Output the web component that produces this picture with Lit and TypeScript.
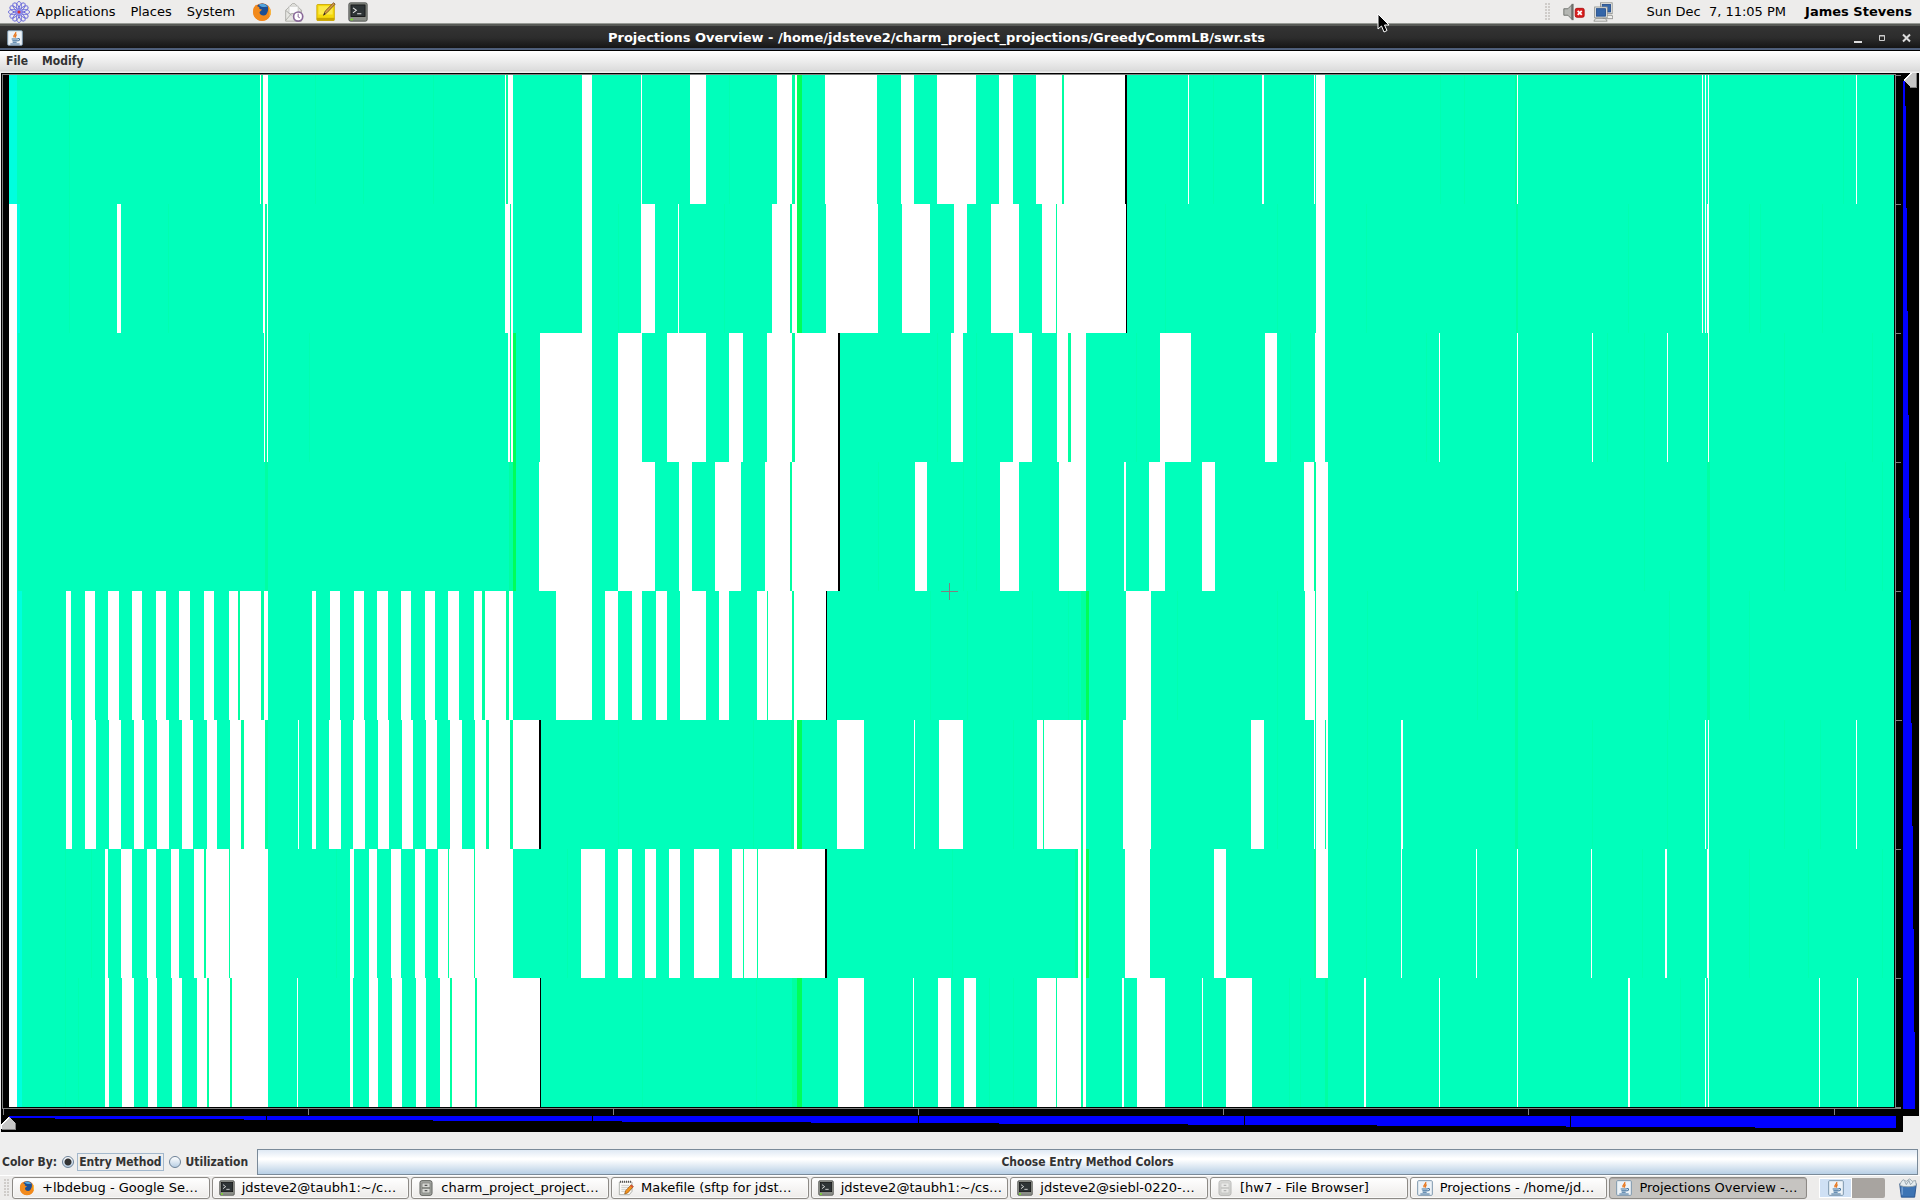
import { LitElement, html, svg, css, type SVGTemplateResult } from "lit";
import { customElement, property, state } from "lit/decorators.js";

type Span = [number, number];

interface Lane {
  idle: Span[];
  edge?: Span[];
  balance?: Span[];
  black?: Span[];
  faint?: number[];
  cyan?: Span;
}

const LANE_HEIGHT = 129;
const LANE_TOP = 75;

const LANES: Lane[] = [
  {
    cyan: [9, 17],
    idle: [[260, 261], [263, 268], [505, 506], [508, 513], [582, 592], [641, 642], [690, 706], [777, 792], [795, 797], [825, 877], [901, 914], [937, 976], [999, 1013], [1036, 1062], [1064, 1125], [1188, 1189], [1262, 1264], [1314, 1315], [1316, 1325], [1517, 1518], [1702, 1703], [1705, 1706], [1708, 1709], [1856, 1857]],
    edge: [[261, 263], [506, 508], [792, 795], [1062, 1064], [1515, 1517]],
    balance: [[797, 802]],
    black: [[1125, 1127]],
    faint: [69, 315, 363, 433, 729, 1213, 1440, 1464, 1843],
  },
  {
    cyan: [17, 20],
    idle: [[9, 17], [117, 121], [263, 265], [267, 268], [505, 510], [511, 513], [582, 592], [641, 655], [678, 679], [772, 790], [792, 797], [826, 878], [902, 930], [954, 967], [991, 1019], [1042, 1056], [1057, 1126], [1316, 1325], [1702, 1703], [1705, 1706], [1707, 1709]],
    edge: [[265, 267], [510, 511], [790, 792], [1056, 1057], [1516, 1518]],
    balance: [[797, 802]],
    black: [[1126, 1127]],
    faint: [69, 168, 618, 724, 1165, 1277, 1366, 1628, 1749, 1760, 1822],
  },
  {
    cyan: [17, 18],
    idle: [[9, 17], [264, 265], [267, 268], [508, 510], [511, 513], [540, 592], [618, 642], [667, 706], [729, 743], [767, 792], [795, 838], [951, 963], [1013, 1032], [1057, 1068], [1071, 1086], [1160, 1191], [1265, 1277], [1315, 1325], [1439, 1440], [1517, 1518], [1592, 1593], [1667, 1668], [1708, 1709]],
    edge: [[265, 267], [510, 511], [792, 795], [1068, 1071], [1707, 1708]],
    balance: [[513, 516]],
    black: [[838, 840]],
    faint: [309, 937, 976, 1136, 1290, 1426, 1607, 1644, 1784, 1872],
  },
  {
    cyan: [17, 18],
    idle: [[9, 17], [539, 592], [618, 655], [679, 692], [715, 741], [765, 790], [792, 838], [915, 927], [1000, 1019], [1059, 1086], [1124, 1126], [1149, 1165], [1202, 1215], [1304, 1314], [1316, 1328], [1517, 1518]],
    edge: [[265, 268], [509, 513], [790, 792], [1314, 1316], [1707, 1710]],
    balance: [[513, 516]],
    black: [[838, 840]],
    faint: [878, 963, 976, 1644, 1784, 1845, 1882],
  },
  {
    cyan: [17, 22],
    idle: [[9, 17], [66, 71], [85, 95], [108, 119], [132, 142], [156, 166], [179, 190], [204, 214], [229, 238], [240, 261], [264, 268], [312, 316], [330, 340], [354, 364], [377, 388], [401, 411], [425, 435], [448, 459], [474, 482], [485, 506], [509, 513], [556, 592], [605, 618], [632, 642], [656, 667], [680, 706], [719, 729], [757, 767], [768, 792], [794, 826], [1126, 1151], [1305, 1315], [1316, 1328]],
    edge: [[238, 240], [261, 264], [482, 485], [506, 509], [767, 768], [792, 794], [1081, 1086], [1315, 1316], [1515, 1518], [1707, 1710]],
    balance: [[1086, 1089]],
    black: [[826, 827]],
    faint: [930, 967, 1032, 1068, 1177, 1277, 1367, 1477, 1669, 1749],
  },
  {
    cyan: [17, 22],
    idle: [[9, 17], [66, 72], [85, 96], [109, 121], [134, 144], [157, 169], [182, 193], [207, 217], [230, 241], [244, 265], [298, 299], [312, 316], [329, 341], [353, 365], [378, 389], [402, 413], [426, 437], [450, 462], [475, 486], [489, 510], [513, 539], [794, 797], [837, 864], [914, 915], [939, 963], [1037, 1043], [1044, 1081], [1083, 1086], [1123, 1151], [1251, 1264], [1314, 1315], [1316, 1325], [1326, 1328], [1401, 1403], [1705, 1706], [1708, 1709], [1856, 1857]],
    edge: [[241, 244], [265, 268], [486, 489], [510, 513], [791, 794], [1043, 1044], [1081, 1083], [1325, 1326], [1515, 1518]],
    balance: [[797, 802]],
    black: [[539, 541]],
    faint: [618, 753, 1013, 1277, 1367, 1592, 1667, 1784, 1820],
  },
  {
    cyan: [17, 22],
    idle: [[9, 17], [105, 108], [121, 132], [147, 156], [171, 179], [194, 204], [206, 229], [230, 268], [350, 354], [369, 377], [391, 401], [415, 425], [438, 448], [449, 474], [475, 513], [581, 605], [618, 632], [645, 656], [669, 680], [694, 719], [732, 743], [744, 757], [758, 825], [1078, 1081], [1083, 1086], [1125, 1150], [1214, 1226], [1316, 1328], [1401, 1402], [1476, 1477], [1517, 1518], [1591, 1592], [1665, 1667], [1707, 1709]],
    edge: [[204, 206], [229, 230], [448, 449], [474, 475], [743, 744], [757, 758], [1075, 1078], [1081, 1083], [1314, 1316]],
    balance: [[1086, 1089]],
    black: [[825, 827]],
    faint: [65, 91, 336, 567, 952, 1366, 1642, 1749, 1808, 1882],
  },
  {
    cyan: [17, 22],
    idle: [[9, 17], [105, 109], [122, 134], [148, 157], [172, 182], [197, 207], [209, 230], [232, 268], [297, 298], [350, 353], [369, 378], [392, 402], [416, 426], [440, 450], [452, 475], [477, 540], [838, 864], [913, 914], [938, 951], [964, 976], [1037, 1056], [1057, 1081], [1083, 1086], [1122, 1124], [1137, 1165], [1202, 1203], [1226, 1252], [1364, 1366], [1439, 1440], [1517, 1518], [1628, 1630], [1705, 1706], [1708, 1709], [1819, 1820], [1857, 1858]],
    edge: [[207, 209], [230, 232], [450, 452], [475, 477], [792, 797], [1056, 1057], [1081, 1083], [1325, 1328]],
    balance: [[797, 802]],
    black: [[540, 541]],
    faint: [65, 78, 642, 756, 989, 1013, 1289, 1300, 1680],
  },
];

const H_STEPS = [9, 55, 244, 433, 622, 811, 999, 1188, 1377, 1566, 1755, 1896];
const V_STEPS = [81, 106, 208, 311, 415, 518, 620, 723, 826, 929, 1032, 1109];
const H_GAPS = [266, 592, 918, 1244, 1570];
const X_TICKS = [3, 308, 613, 918, 1223, 1528, 1834];

const spans = (list: Span[] | undefined, y: number, cls: string): SVGTemplateResult[] =>
  (list ?? []).map(([a, b]) => svg`<rect class=${cls} x=${a} y=${y} width=${b - a} height=${LANE_HEIGHT}></rect>`);

const ICONS: Record<string, SVGTemplateResult> = {
  distro: svg`
    <g fill="none" stroke="#5a5ad8" stroke-width="0.9">
      ${Array.from({ length: 12 }, (_, i) => svg`<ellipse cx="12" cy="5.600" rx="2.600" ry="5" transform="rotate(${i * 30} 12 12)"></ellipse>`)}
    </g>
    <circle cx="12" cy="12" r="3.400" fill="#8c8cf0"></circle>
    <circle cx="12" cy="12" r="1.700" fill="#d83030"></circle>`,
  firefox: svg`
    <circle cx="12" cy="12" r="10.5" fill="#e66a12"></circle>
    <circle cx="12.5" cy="9.5" r="7.8" fill="#1d4f94"></circle>
    <path d="M8 3c4-2 9-.6 11 3-3-1-4 .5-6 0S9 5 8 3z" fill="#54a5dc"></path>
    <path d="M2 7c1.500-2.500 2.500-3 3-4 .5 2 2 2.500 4 3-1 2 0 3 3 3-1 2-3 2-3 4 1 4 6 4 8 2 2-3 3-6 2-10 4 4 4.500 9 2 13-4 6-13 7-18 0C1 15 1 11 2 7z" fill="#f28a1c"></path>
    <path d="M19.500 5c3 3.500 4 8 1.500 12 .5-4 .5-8-1.500-12z" fill="#fcd34a"></path>`,
  mail: svg`
    <path d="M2 10 10 2h3l8 8v13H2z" fill="#e6e6e2" stroke="#a5a5a0"></path>
    <path d="M6 5h11v9H6z" fill="#fafafa" stroke="#c4c4c0"></path>
    <path d="m2 22 7-8h5l7 8M2 10l7 6M21 10l-6 5" fill="none" stroke="#a5a5a0"></path>
    <circle cx="17" cy="17.500" r="5.500" fill="#fff" stroke="#8a6a9a" stroke-width="2"></circle>
    <path d="M17 14v4l2 1" fill="none" stroke="#8a6a9a" stroke-width="1.200"></path>`,
  note: svg`
    <rect x="1" y="3" width="21" height="19" rx="1" fill="#f5d90a" stroke="#c9a400"></rect>
    <rect x="1" y="19" width="21" height="3.500" fill="#c9a400"></rect>
    <rect x="3" y="5" width="17" height="10" fill="#fbe94a"></rect>
    <path d="m9 16 2-5L21 1l2 1.500L13 13z" fill="#d89a48" stroke="#6e4a1c"></path>
    <path d="m9 16 1-3 1.500 1.500z" fill="#222"></path>`,
  terminal: svg`
    <rect x="1" y="1" width="22" height="22" rx="2" fill="#8b8e88" stroke="#454744"></rect>
    <rect x="3.500" y="3.500" width="17" height="14" fill="#2e3436" stroke="#111"></rect>
    <path d="m6 7 4 3-4 3M11 14h5" fill="none" stroke="#e4e4e4" stroke-width="1.300"></path>
    <path d="M3 21h3" stroke="#7ae02a" stroke-width="2"></path>`,
  java: svg`
    <rect x="1" y="1" width="22" height="22" rx="1.500" fill="#edf3f8" stroke="#7d97ad" stroke-width="1.500"></rect>
    <path d="M13 3c2 3-5 4-2 8M14.500 7c-3 1.500-1 2.500-2 4.500" fill="none" stroke="#e8771e" stroke-width="2"></path>
    <path d="M7 13.500h9M8 16h8M8.500 18.500h6M16 13c4-.8 3.500 3 0 3.500M5 21h14" fill="none" stroke="#3f709c" stroke-width="1.600"></path>`,
  cabinet: svg`
    <rect x="3" y="1" width="18" height="22" rx="3" fill="#a9aba7" stroke="#5c5e5a" stroke-width="1.500"></rect>
    <rect x="6" y="4.500" width="12" height="7" fill="#d6d7d3" stroke="#70726e"></rect>
    <rect x="6" y="12.500" width="12" height="7" fill="#d6d7d3" stroke="#70726e"></rect>
    <path d="M10 8h4M10 16h4" stroke="#555" stroke-width="2"></path>`,
  editor: svg`
    <path d="M2 3h19v14l-4 5H2z" fill="#fbfbf9" stroke="#8d8f8a"></path>
    <path d="M3 2.500h17" stroke="#555" stroke-width="3" stroke-dasharray="1.500 1.500"></path>
    <path d="M5 8h12M5 11h12M5 14h8M5 17h6" stroke="#b3b5b1"></path>
    <path d="m10 21 1.500-5L20 7l3 3-8.500 9.500z" fill="#f2921d" stroke="#8a4a06"></path>
    <path d="m20 7 3 3-1.500 1.500-3-3z" fill="#d84a3a"></path>`,
  volume: svg`
    <path d="M1 8h5l5-5v18l-5-5H1z" fill="#b4b6b2" stroke="#60625e"></path>
    <path d="M10.500 2h2.500v20h-2.500z" fill="#6c6e6a"></path>
    <rect x="15" y="7.500" width="11" height="11" rx="2" fill="#d81e1e" stroke="#a80808"></rect>
    <path d="m18 10.500 5 5m0-5-5 5" stroke="#fff" stroke-width="2.200"></path>`,
  network: svg`
    <g stroke="#8a8c88" fill="#f0f0ee">
      <path d="M12 16h11l1 4H12z"></path>
      <rect x="9" y="1" width="14" height="13"></rect>
      <rect x="11" y="3" width="10" height="9" fill="#3566a8" stroke="#204a87"></rect>
      <path d="M3 20h12l2 3H1z"></path>
      <rect x="2" y="6" width="15" height="13"></rect>
      <rect x="4" y="8" width="11" height="9" fill="#3566a8" stroke="#204a87"></rect>
    </g>`,
  trash: svg`
    <path d="M2 7h20l-2 16H4z" fill="#3d74b4" stroke="#204a87"></path>
    <path d="m3 6 3-4 4 2 4-3 3 3 4-1 1 6c-6 2-14 2-20 0z" fill="#e4ebee" stroke="#8a9aa4"></path>
    <path d="m8 4 2 4 3-5 2 5 3-3" fill="none" stroke="#8a9aa4"></path>
    <path d="M5 11v9" stroke="#7fa8d6" stroke-width="1.500"></path>`,
};

@customElement("ui-icon")
class UiIcon extends LitElement {
  @property() name = "java";
  @property({ type: Boolean }) wide = false;

  static styles = css`
    :host { display: block; flex: none; width: 20px; height: 20px; }
    svg { display: block; width: 100%; height: 100%; }
  `;

  render() {
    return html`<svg viewBox=${this.wide ? "0 0 27 24" : "0 0 24 24"} aria-hidden="true">${ICONS[this.name]}</svg>`;
  }
}

@customElement("timeline-view")
class TimelineView extends LitElement {
  static styles = css`
    :host { display: grid; grid-template-columns: minmax(0, 1fr) 16px; grid-template-rows: minmax(0, 1fr) 16px; }
    svg { display: block; width: 100%; height: 100%; background: #000; shape-rendering: crispEdges; }
    .corner { background: #eee; }
    .busy { fill: #00ffbb; }
    .idle { fill: #fff; }
    .edge { fill: #00ffa2; }
    .balance { fill: #00ff58; }
    .gap { fill: #000; }
    .cyan { fill: #00ffde; }
    .faint { fill: #00ffb0; }
    .axis { fill: #808080; }
    .load { fill: #00f; }
    .thumb { fill: #c6c6c6; }
    .shine { fill: #fff; }
    .shade { fill: #808080; }
  `;

  private plot() {
    return html`<svg viewBox="1 73 1902 1043" preserveAspectRatio="none" role="img" aria-label="Processor timelines">
      <rect class="axis" x="2" y="74" width="1894" height="1"></rect>
      <rect class="axis" x="2" y="74" width="1" height="1034"></rect>
      <rect class="axis" x="2" y="1108" width="1899" height="1"></rect>
      <rect class="axis" x="1895" y="74" width="1" height="1034"></rect>
      ${X_TICKS.map((x) => svg`<rect class="axis" x=${x} y="1108" width="1" height="7"></rect>`)}
      ${Array.from({ length: 9 }, (_, i) => svg`<rect class="axis" x="1896" y=${75 + i * LANE_HEIGHT} width=${i === 5 ? 6 : 5} height="1"></rect>`)}
      <rect class="busy" x="9" y="75" width="1885" height="1032"></rect>
      ${LANES.map((lane, i) => {
        const y = LANE_TOP + i * LANE_HEIGHT;
        return svg`
          ${spans(lane.faint?.map((x): Span => [x, x + 1]), y, "faint")}
          ${spans(lane.cyan ? [lane.cyan] : [], y, "cyan")}
          ${spans(lane.idle, y, "idle")}
          ${spans(lane.edge, y, "edge")}
          ${spans(lane.balance, y, "balance")}
          ${spans(lane.black, y, "gap")}`;
      })}
      <rect class="axis" x="941" y="591" width="17" height="1"></rect>
      <rect class="axis" x="949" y="583" width="1" height="17"></rect>
    </svg>`;
  }

  render() {
    return html`
      ${this.plot()}
      <svg viewBox="1903 73 16 1043" preserveAspectRatio="none" role="img" aria-label="Load by processor">
        ${V_STEPS.slice(0, -1).map((y, i) => svg`<rect class="load" x="1903" y=${y} width=${i + 2} height=${V_STEPS[i + 1] - y}></rect>`)}
        <path class="thumb" d="M1904 80l6-7h6v14h-6z"></path>
        <path class="shine" d="M1903 80l7-7h2l-7 8z"></path>
        <path class="shade" d="M1916 73h1v15h-7v-1h6z"></path>
      </svg>
      <svg viewBox="1 1116 1902 16" preserveAspectRatio="none" role="img" aria-label="Load over time">
        ${H_STEPS.slice(0, -1).map((x, i) => svg`<rect class="load" x=${x} y="1116" width=${H_STEPS[i + 1] - x} height=${i + 2}></rect>`)}
        ${H_GAPS.map((x) => svg`<rect class="gap" x=${x} y="1116" width="1" height="16"></rect>`)}
        <path class="thumb" d="M2 1123l7-6 6 6v6H2z"></path>
        <path class="shine" d="M1 1124l8-8v2l-7 7v4H1z"></path>
        <path class="shade" d="M15 1123h1v7H2v-1h13z"></path>
      </svg>
      <div class="corner"></div>`;
  }
}

interface Task {
  icon: string;
  label: string;
  active?: boolean;
  dim?: boolean;
}

const TASKS: Task[] = [
  { icon: "firefox", label: "+lbdebug - Google Se…" },
  { icon: "terminal", label: "jdsteve2@taubh1:~/c…" },
  { icon: "cabinet", label: "charm_project_project…" },
  { icon: "editor", label: "Makefile (sftp for jdst…" },
  { icon: "terminal", label: "jdsteve2@taubh1:~/cs…" },
  { icon: "terminal", label: "jdsteve2@siebl-0220-…" },
  { icon: "cabinet", label: "[hw7 - File Browser]", dim: true },
  { icon: "java", label: "Projections - /home/jd…" },
  { icon: "java", label: "Projections Overview -…", active: true },
];

@customElement("app-root")
class AppRoot extends LitElement {
  @state() private colorBy = "entry";

  static styles = css`
    :host {
      display: flex;
      flex-direction: column;
      height: 100vh;
      overflow: hidden;
      background: #eee;
      color: #000;
      font: 13px/16px "DejaVu Sans", sans-serif;
    }
    button { margin: 0; padding: 0; border: 0; background: none; color: inherit; font: inherit; white-space: nowrap; }
    .panel { display: flex; align-items: center; height: 24px; flex: none; padding: 0 8px; box-sizing: border-box; background: #edeceb; border-bottom: 1px solid #979a95; }
    .distro { width: 22px; height: 22px; }
    .menus { display: flex; gap: 15px; margin: 0 17px 0 6px; }
    .launchers { display: flex; gap: 12px; }
    .spacer { flex: 1; }
    .grip { width: 6px; height: 18px; flex: none; background: radial-gradient(circle at 1px 1px, #cfccc9 1px, transparent 1px) 0 0 / 3px 3px; }
    .tray { display: flex; align-items: center; gap: 8px; margin: 0 34px 0 12px; }
    .sound { width: 22px; }
    .clock { margin-right: 19px; white-space: pre; }
    .user { font-weight: bold; }

    .titlebar { display: flex; align-items: center; height: 27px; flex: none; box-sizing: border-box; padding: 0 6px 0 7px; border-top: 2px solid #585a56; border-bottom: 1px solid #000; background: linear-gradient(#343434, #2c2c2c 50%, #161616 90%, #51627f 94%, #51627f); color: #fff; }
    .app-icon { width: 16px; height: 16px; }
    .title { flex: 1; margin: 0; text-align: center; font-size: 13px; font-weight: bold; }
    .window-buttons { display: flex; gap: 8px; }
    .window-buttons svg { display: block; width: 16px; height: 16px; }

    .menubar { display: flex; gap: 14px; height: 22px; flex: none; box-sizing: border-box; padding: 2px 6px 0; background: linear-gradient(#fff, #dcdcdc 88%, #ccc 90%, #eee 95%); color: #333; font-family: "DejaVu Sans Condensed", "DejaVu Sans", sans-serif; font-size: 12px; font-weight: bold; }
    .menubar button { height: 16px; }

    .timeline { flex: 1; min-height: 0; padding: 0 1px; }

    .controls { display: flex; align-items: center; height: 43px; flex: none; box-sizing: border-box; padding: 17px 2px 0; color: #333; font-family: "DejaVu Sans Condensed", "DejaVu Sans", sans-serif; font-size: 12px; font-weight: bold; white-space: nowrap; }
    .option { display: flex; align-items: center; gap: 3px; margin-left: 5px; }
    .option input { appearance: none; width: 12px; height: 12px; flex: none; margin: 0; border: 1px solid #6c8197; border-radius: 50%; background: linear-gradient(#fff, #b9cfe4); }
    .option input:checked { background: radial-gradient(circle, #333 3px, transparent 4px), linear-gradient(#fff, #b9cfe4); }
    .option span { padding: 0 1px; border: 1px solid transparent; }
    .option input:checked + span { border-color: #a3b8cc; }
    .choose { flex: 1; height: 26px; margin-left: 7px; border: 1px solid #7a8a99; background: linear-gradient(#dfe9f4, #fff 35%, #fff 40%, #b8cfe5); }

    .taskbar { display: flex; align-items: center; height: 25px; flex: none; box-sizing: border-box; padding: 0 2px 1px 4px; background: #edeceb; border-top: 1px solid #fff; }
    .tasks { display: flex; gap: 2px; flex: 1; margin: 0 12px 0 2px; min-width: 0; }
    .task { display: flex; align-items: center; gap: 7px; flex: 1 1 0; min-width: 0; height: 22px; padding: 0 1px 0 6px; box-sizing: border-box; border: 1px solid #8d8a86; border-radius: 3px; background: linear-gradient(#fff, #edebe9); box-shadow: inset 0 0 0 1px #f9f9f8; }
    .task ui-icon { width: 16px; height: 16px; }
    .task span { flex: 1; min-width: 0; text-align: left; }
    .active { background: #c6c4c1; box-shadow: inset 0 1px 1px #a8a5a2; }
    .dim ui-icon { opacity: 0.4; }
    .workspaces { display: flex; width: 66px; height: 20px; margin-right: 13px; flex: none; background: #a8a4a0; border-radius: 2px; }
    .workspace { display: grid; place-items: center; flex: 1; border: 1px solid transparent; box-sizing: border-box; }
    .workspace ui-icon { width: 16px; height: 16px; }
    .current { background: #cfe0f4; border-color: #fff; }

    .pointer { position: absolute; left: 1377px; top: 13px; width: 14px; height: 20px; pointer-events: none; }
  `;

  private option(value: string, label: string) {
    return html`<label class="option">
      <input type="radio" name="color-by" .checked=${this.colorBy === value} @change=${() => (this.colorBy = value)} />
      <span>${label}</span>
    </label>`;
  }

  render() {
    return html`
      <header class="panel">
        <ui-icon name="distro" class="distro"></ui-icon>
        <nav class="menus">
          <button>Applications</button><button>Places</button><button>System</button>
        </nav>
        <div class="launchers">
          ${["firefox", "mail", "note", "terminal"].map((n) => html`<button aria-label=${n}><ui-icon name=${n}></ui-icon></button>`)}
        </div>
        <div class="spacer"></div>
        <div class="grip"></div>
        <div class="tray">
          <ui-icon class="sound" name="volume" wide></ui-icon>
          <ui-icon name="network"></ui-icon>
        </div>
        <time class="clock">Sun Dec  7, 11:05 PM</time>
        <button class="user">James Stevens</button>
      </header>

      <div class="titlebar">
        <ui-icon class="app-icon" name="java"></ui-icon>
        <h1 class="title">Projections Overview - /home/jdsteve2/charm_project_projections/GreedyCommLB/swr.sts</h1>
        <div class="window-buttons">
          <button aria-label="Minimize"><svg viewBox="0 0 16 16"><path d="M4 11h8v2H4z" fill="#ddd"></path></svg></button>
          <button aria-label="Maximize"><svg viewBox="0 0 16 16"><path d="M5.500 5.500h5v5h-5zM5 6h6" fill="none" stroke="#ccc"></path></svg></button>
          <button aria-label="Close"><svg viewBox="0 0 16 16"><path d="m5 4.500 7 7m0-7-7 7" fill="none" stroke="#ddd" stroke-width="2"></path></svg></button>
        </div>
      </div>

      <nav class="menubar"><button>File</button><button>Modify</button></nav>

      <timeline-view class="timeline"></timeline-view>

      <div class="controls">
        <span>Color By:</span>
        ${this.option("entry", "Entry Method")}
        ${this.option("utilization", "Utilization")}
        <button class="choose">Choose Entry Method Colors</button>
      </div>

      <footer class="taskbar">
        <div class="grip"></div>
        <div class="tasks">
          ${TASKS.map((t) => html`<button class="task ${t.active ? "active" : ""} ${t.dim ? "dim" : ""}"><ui-icon name=${t.icon}></ui-icon><span>${t.label}</span></button>`)}
        </div>
        <div class="workspaces">
          <button class="workspace current" aria-label="Workspace 1"><ui-icon name="java"></ui-icon></button>
          <button class="workspace" aria-label="Workspace 2"></button>
        </div>
        <button aria-label="Trash"><ui-icon name="trash"></ui-icon></button>
      </footer>

      <svg class="pointer" viewBox="0 0 14 20" aria-hidden="true">
        <path d="M1 1v15l3.500-3 2.500 6 3-1.500-2.500-5.500H12z" fill="#000" stroke="#fff"></path>
      </svg>
    `;
  }
}
